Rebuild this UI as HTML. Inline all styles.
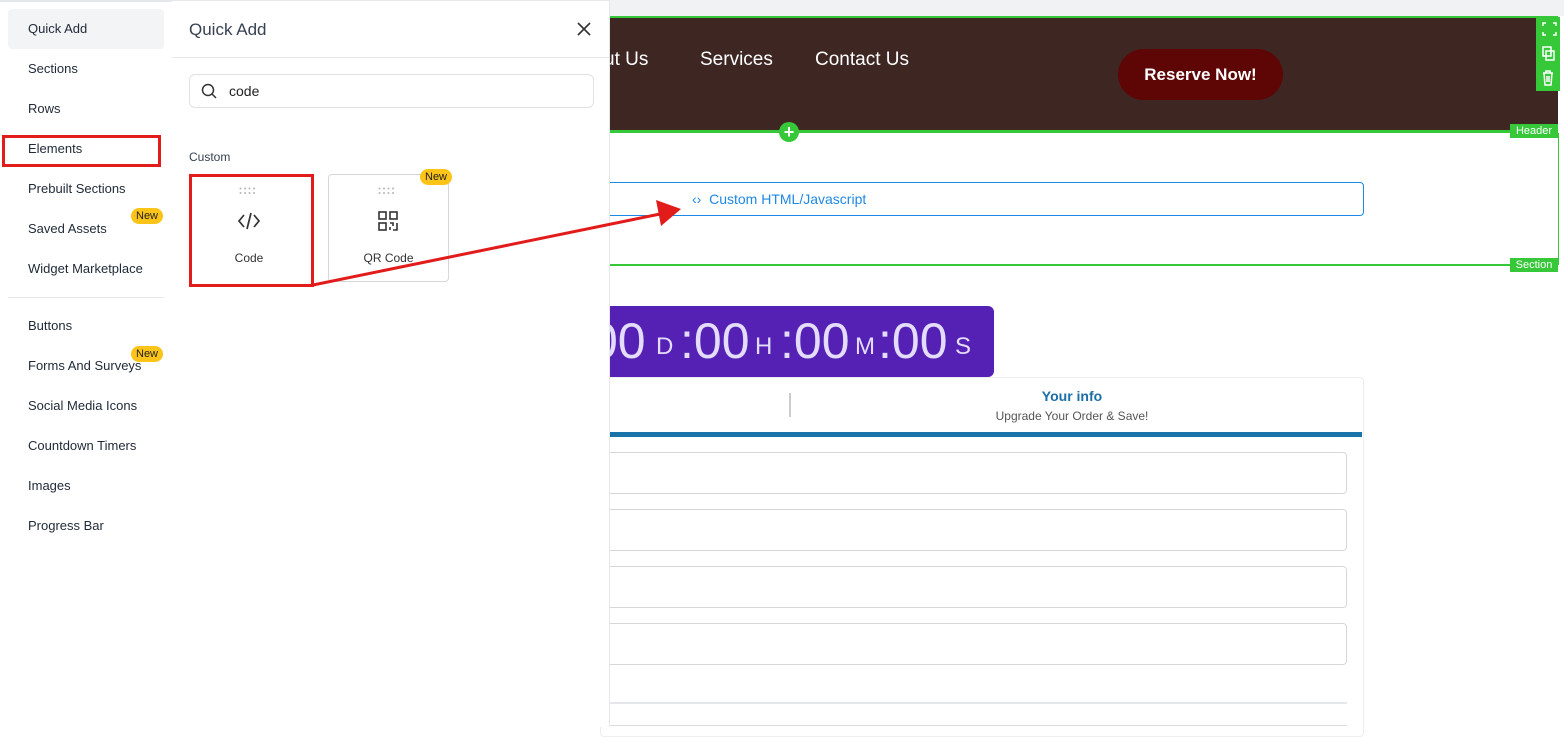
<!DOCTYPE html>
<html><head><style>
*{box-sizing:border-box;margin:0;padding:0}
body{width:1564px;height:727px;overflow:hidden;background:#fff;font-family:"Liberation Sans",sans-serif;position:relative}
.a{position:absolute}
.item{position:absolute;left:28px;font-size:13px;color:#1f2937}
.new{position:absolute;background:#fcc419;color:#222;font-size:11px;border-radius:9px;padding:2px 5px;line-height:12px}
.inp{position:absolute;left:600px;width:747px;height:42px;border:1px solid #d5d7dd;border-radius:4px;background:#fff}
.cd{position:absolute;top:306px;color:#e4dcfb;font-size:50px;line-height:71px;white-space:nowrap}
.cu{position:absolute;top:330px;color:#e4dcfb;font-size:24px;line-height:34px}
</style></head><body>
<!-- canvas -->
<div class="a" style="left:600px;top:0;width:964px;height:16px;background:#f1f2f4"></div>
<div class="a" style="left:600px;top:16px;width:958px;height:117px;background:#3e2723;border-top:2px solid #37c83a;border-bottom:3px solid #37c83a"></div>
<div class="a" style="left:604px;top:49px;color:#fff;font-size:19px;white-space:nowrap">ut Us</div>
<div class="a" style="left:700px;top:49px;color:#fff;font-size:19px;white-space:nowrap">Services</div>
<div class="a" style="left:815px;top:49px;color:#fff;font-size:19px;white-space:nowrap">Contact Us</div>
<div class="a" style="left:1118px;top:49px;width:165px;height:51px;border-radius:26px;background:#5e0505;color:#fff;font-weight:bold;font-size:17px;text-align:center;line-height:51px">Reserve Now!</div>
<div class="a" style="left:1536px;top:17px;width:24px;height:74px;background:#37c83a"></div>
<svg class="a" style="left:1536px;top:17px" width="24" height="74" fill="none" stroke="#fff" stroke-width="1.5"><path d="M7 9V6h3M17 6h3v3M7 15v3h3M20 15v3h-3"/><rect x="7" y="30" width="8" height="9"/><rect x="10" y="34" width="8" height="9"/><path d="M7 56h10M10 56v-2h4v2M8 56l1 12h6l1-12M11 59v6M13 59v6"/></svg>
<div class="a" style="left:779px;top:122px;width:20px;height:20px;border-radius:50%;background:#37c83a;color:#fff;font-size:18px;line-height:20px;text-align:center;font-weight:bold">+</div>
<div class="a" style="left:1510px;top:124px;width:48px;height:14px;background:#37c83a;color:#fff;font-size:11px;text-align:center;line-height:14px">Header</div>
<div class="a" style="left:1558px;top:133px;width:1px;height:132px;background:#37c83a"></div>
<div class="a" style="left:600px;top:264px;width:958px;height:2px;background:#37c83a"></div>
<div class="a" style="left:1510px;top:258px;width:48px;height:14px;background:#37c83a;color:#fff;font-size:11px;text-align:center;line-height:14px">Section</div>
<div class="a" style="left:600px;top:182px;width:764px;height:34px;border:1px solid #1e88e5;border-radius:4px"></div>
<div class="a" style="left:692px;top:191px;color:#1e88e5;font-size:14px">&lsaquo;&rsaquo;&nbsp; Custom HTML/Javascript</div>
<div class="a" style="left:600px;top:306px;width:394px;height:71px;background:#5521b5;border-radius:0 6px 6px 0;overflow:hidden">
<div class="cd" style="top:0;left:-10px">00</div><div class="cu" style="top:24px;left:56px">D</div>
<div class="cd" style="top:0;left:80px">:00</div><div class="cu" style="top:24px;left:155px">H</div>
<div class="cd" style="top:0;left:180px">:00</div><div class="cu" style="top:24px;left:255px">M</div>
<div class="cd" style="top:0;left:278px">:00</div><div class="cu" style="top:24px;left:355px">S</div>
</div>
<div class="a" style="left:600px;top:377px;width:764px;height:360px;border:1px solid #eceef1;border-radius:4px"></div>
<div class="a" style="left:789px;top:393px;width:2px;height:24px;background:#ccc"></div>
<div class="a" style="left:980px;top:388px;width:184px;text-align:center;color:#1a6fa8;font-weight:bold;font-size:14px">Your info</div>
<div class="a" style="left:960px;top:409px;width:224px;text-align:center;color:#555;font-size:12px">Upgrade Your Order &amp; Save!</div>
<div class="a" style="left:600px;top:432px;width:762px;height:5px;background:#1a73a8"></div>
<div class="inp" style="top:452px"></div><div class="inp" style="top:509px"></div><div class="inp" style="top:566px"></div><div class="inp" style="top:623px"></div>
<div class="a" style="left:600px;top:702px;width:747px;height:2px;background:#e5e7eb"></div>
<div class="a" style="left:600px;top:725px;width:747px;height:1px;background:#ddd"></div>
<!-- left sidebar -->
<div class="a" style="left:0;top:0;width:172px;height:727px;background:#fff;border-top:2px solid #e5e7eb"></div>
<div class="a" style="left:8px;top:9px;width:156px;height:40px;background:#f3f4f6;border-radius:4px"></div>
<div class="item" style="top:21px">Quick Add</div>
<div class="item" style="top:61px">Sections</div>
<div class="item" style="top:101px">Rows</div>
<div class="item" style="top:141px">Elements</div>
<div class="a" style="left:2px;top:135px;width:159px;height:32px;border:3px solid #e21b1b"></div>
<div class="item" style="top:181px">Prebuilt Sections</div>
<div class="item" style="top:221px">Saved Assets</div><div class="new" style="left:131px;top:208px">New</div>
<div class="item" style="top:261px">Widget Marketplace</div>
<div class="a" style="left:8px;top:297px;width:156px;height:1px;background:#e5e7eb"></div>
<div class="item" style="top:318px">Buttons</div>
<div class="item" style="top:358px">Forms And Surveys</div><div class="new" style="left:131px;top:346px">New</div>
<div class="item" style="top:398px">Social Media Icons</div>
<div class="item" style="top:438px">Countdown Timers</div>
<div class="item" style="top:478px">Images</div>
<div class="item" style="top:518px">Progress Bar</div>
<!-- panel -->
<div class="a" style="left:172px;top:0;width:438px;height:727px;background:#fff;border-top:1px solid #e5e7eb;border-right:1px solid #e5e7eb"></div>
<div class="a" style="left:189px;top:20px;font-size:17px;color:#374151">Quick Add</div>
<svg class="a" style="left:577px;top:22px" width="14" height="14" stroke="#333" stroke-width="1.6"><path d="M1 1L13 13M13 1L1 13"/></svg>
<div class="a" style="left:172px;top:57px;width:438px;height:1px;background:#e5e7eb"></div>
<div class="a" style="left:189px;top:74px;width:405px;height:34px;border:1px solid #e0e2e6;border-radius:6px"></div>
<svg class="a" style="left:201px;top:83px" width="16" height="16"><circle cx="7" cy="7" r="5.5" fill="none" stroke="#333" stroke-width="1.5"/><line x1="11" y1="11" x2="15" y2="15" stroke="#333" stroke-width="1.5"/></svg>
<div class="a" style="left:229px;top:83px;font-size:14px;color:#222">code</div>
<div class="a" style="left:189px;top:150px;font-size:12px;color:#374151">Custom</div>
<div class="a" style="left:328px;top:174px;width:121px;height:108px;border:1px solid #d5d7dd;border-radius:4px"></div>
<svg class="a" style="left:239px;top:187px" width="20" height="8" fill="#b5b5c0"><circle cx="1.5" cy="1.5" r="1"/><circle cx="6" cy="1.5" r="1"/><circle cx="10.5" cy="1.5" r="1"/><circle cx="15" cy="1.5" r="1"/><circle cx="1.5" cy="6" r="1"/><circle cx="6" cy="6" r="1"/><circle cx="10.5" cy="6" r="1"/><circle cx="15" cy="6" r="1"/></svg>
<svg class="a" style="left:378px;top:187px" width="20" height="8" fill="#b5b5c0"><circle cx="1.5" cy="1.5" r="1"/><circle cx="6" cy="1.5" r="1"/><circle cx="10.5" cy="1.5" r="1"/><circle cx="15" cy="1.5" r="1"/><circle cx="1.5" cy="6" r="1"/><circle cx="6" cy="6" r="1"/><circle cx="10.5" cy="6" r="1"/><circle cx="15" cy="6" r="1"/></svg>
<svg class="a" style="left:238px;top:211px" width="22" height="20" fill="none" stroke="#333" stroke-width="1.7"><path d="M6 4L1 10l5 6M16 4l5 6-5 6M13 2L9 18"/></svg>
<svg class="a" style="left:378px;top:211px" width="20" height="20" fill="none" stroke="#333" stroke-width="1.6"><rect x="1" y="1" width="7" height="7"/><rect x="12" y="1" width="7" height="7"/><rect x="1" y="12" width="7" height="7"/><path d="M12 12h3v3M19 12v7h-4M12 16v3"/></svg>
<div class="a" style="left:189px;top:251px;width:120px;text-align:center;font-size:12px;color:#333">Code</div>
<div class="a" style="left:328px;top:251px;width:121px;text-align:center;font-size:12px;color:#333">QR Code</div>
<div class="new" style="left:420px;top:169px">New</div>
<div class="a" style="left:189px;top:174px;width:125px;height:113px;border:3px solid #e21b1b"></div>
<svg class="a" style="left:0;top:0" width="1564" height="727"><line x1="313" y1="285" x2="665" y2="213" stroke="#e21b1b" stroke-width="3"/><polygon points="681,209 656,200 661,226" fill="#e21b1b"/></svg>
</body></html>
